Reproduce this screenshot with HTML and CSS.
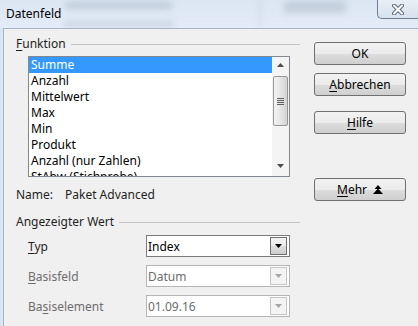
FILE: index.html
```html
<!doctype html>
<html lang="de">
<head>
  <meta charset="UTF-8">
  <title>Datenfeld</title>
  <link rel="stylesheet" href="styles.css">
</head>
<body>
<div class="window">
  <div class="titlebar">
    <span class="title">Datenfeld</span>
    <div class="ghost ghost-a"></div>
    <div class="ghost ghost-b"></div>
    <div class="ghost ghost-c"></div>
    <div class="ghost ghost-line"></div>
    <div class="close">
      <svg width="12" height="11" viewBox="0 0 12 11">
        <path d="M2 1.5 L10 9.5 M10 1.5 L2 9.5" stroke="#5d6b7d" stroke-width="4" stroke-linecap="round"/>
        <path d="M2 1.5 L10 9.5 M10 1.5 L2 9.5" stroke="#fff" stroke-width="2" stroke-linecap="round"/>
      </svg>
    </div>
  </div>
  <div class="frame">
    <div class="left">
      <div class="group-head"><span><u>F</u>unktion</span></div>
      <div class="listbox">
        <ul class="items">
          <li class="selected">Summe</li>
          <li>Anzahl</li>
          <li>Mittelwert</li>
          <li>Max</li>
          <li>Min</li>
          <li>Produkt</li>
          <li>Anzahl (nur Zahlen)</li>
          <li>StAbw (Stichprobe)</li>
        </ul>
        <div class="scrollbar">
          <svg class="arrow" width="7" height="4" viewBox="0 0 7 4"><path d="M3.5 0 L7 4 L0 4 Z" fill="#4d4d4d"/></svg>
          <div class="thumb">
            <span class="grip"></span><span class="grip"></span><span class="grip"></span><span class="grip"></span>
          </div>
          <svg class="arrow down" width="7" height="4" viewBox="0 0 7 4"><path d="M0 0 L7 0 L3.5 4 Z" fill="#4d4d4d"/></svg>
        </div>
      </div>
      <div class="name-row">
        <span class="name-label">Name:</span>
        <span>Paket Advanced</span>
      </div>
      <div class="group-head second"><span>Angezeigter Wert</span></div>
      <div class="fields">
        <span class="label"><u>T</u>yp</span>
        <div class="combo">
          <span>Index</span>
          <span class="drop"><svg width="7" height="4" viewBox="0 0 7 4"><path d="M0 0 L7 0 L3.5 4 Z" fill="#000"/></svg></span>
        </div>
        <span class="label disabled"><u>B</u>asisfeld</span>
        <div class="combo disabled">
          <span>Datum</span>
          <span class="drop"><svg width="7" height="4" viewBox="0 0 7 4"><path d="M0 0 L7 0 L3.5 4 Z" fill="#a6a6a6"/></svg></span>
        </div>
        <span class="label disabled">Ba<u>s</u>iselement</span>
        <div class="combo disabled">
          <span>01.09.16</span>
          <span class="drop"><svg width="7" height="4" viewBox="0 0 7 4"><path d="M0 0 L7 0 L3.5 4 Z" fill="#a6a6a6"/></svg></span>
        </div>
      </div>
    </div>
    <div class="right">
      <button class="btn"><span>OK</span></button>
      <button class="btn"><span><u>A</u>bbrechen</span></button>
      <button class="btn help"><span><u>H</u>ilfe</span></button>
      <button class="btn more"><span><u>M</u>ehr</span>
        <svg width="10" height="10" viewBox="0 0 10 10"><path d="M5 0 L8.5 4 L1.5 4 Z M5 3.5 L10 9 L0 9 Z" fill="#000"/></svg>
      </button>
    </div>
  </div>
</div>
</body>
</html>
```

FILE: styles.css
```css
html, body { margin: 0; padding: 0; }
* { box-sizing: border-box; font-family: "Noto Sans", "Open Sans", sans-serif; }
body { width: 418px; height: 326px; overflow: hidden; background: #d9e5f2; font-size: 12px; color: #1e1e1e; }
u { text-decoration: underline; text-underline-offset: 2px; }

.window { display: flex; flex-direction: column; height: 326px; }
.titlebar { position: relative; height: 28px; background: linear-gradient(#dbe6f3, #e3ecf7); overflow: hidden; }
.title { position: relative; z-index: 1; display: block; padding: 6px 0 0 6px; line-height: 16px; color: #000; }
.ghost { position: absolute; background: #8d99a8; filter: blur(3px); opacity: .35; }
.ghost-a { left: 66px; top: 2px; width: 106px; height: 7px; }
.ghost-b { left: 64px; top: 21px; width: 110px; height: 6px; opacity: .25; }
.ghost-c { left: 284px; top: 1px; width: 62px; height: 12px; background: #a7b3c1; opacity: .45; }
.ghost-line { left: 259px; top: 0; width: 2px; height: 28px; opacity: .25; }
.close { position: absolute; right: 0; top: 0; width: 41px; height: 19px; border: 1px solid #6f7e91; border-top: 0; border-right: 0; border-bottom-left-radius: 5px; background: linear-gradient(#e9eff7, #d6e1ee); display: flex; align-items: center; justify-content: center; }

.frame { flex: 1; display: flex; margin-left: 3px; background: #f0f0f0; border-top: 1px solid #a6b4c5; border-left: 1px solid #a6b4c5; }
.left { width: 296px; padding: 7px 0 0 12px; }
.right { display: flex; flex-direction: column; margin-left: 14px; padding-top: 13px; }

.group-head { display: flex; align-items: center; line-height: 16px; color: #1e1e1e; }
.group-head::after { content: ""; flex: 1; height: 1px; background: #c4c4c4; margin-left: 5px; }
.group-head.second { margin-top: 11px; }

.listbox { display: flex; width: 262px; height: 121px; margin: 4px 0 0 12px; border: 1px solid #828790; background: #fff; overflow: hidden; }
.items { flex: 1; margin: 0; padding: 0; list-style: none; }
.items li { height: 16px; line-height: 16px; padding-left: 2px; color: #000; white-space: nowrap; }
.items li.selected { background: #3399ff; color: #fff; }
.scrollbar { width: 17px; display: flex; flex-direction: column; align-items: center; background: #f4f4f4; }
.scrollbar .arrow { margin: 6px 0 0; }
.scrollbar .arrow.down { margin: auto 0 8px; }
.thumb { width: 15px; height: 50px; margin-top: 9px; border: 1px solid #969696; border-radius: 2px; background: linear-gradient(to right, #f3f3f3, #e2e2e2 60%, #d3d3d3); display: flex; flex-direction: column; align-items: center; justify-content: center; gap: 1px; }
.grip { width: 7px; height: 1px; background: #5f5f5f; }

.name-row { display: flex; margin-top: 10px; line-height: 16px; }
.name-label { width: 49px; }

.fields { display: grid; grid-template-columns: 118px 144px; grid-auto-rows: 22px; row-gap: 8px; margin: 5px 0 0 12px; }
.label { align-self: center; color: #1e1e1e; }
.label.disabled { color: #6d6d6d; }
.combo { display: flex; align-items: center; justify-content: space-between; border: 1px solid #7a7a7a; background: #fff; padding: 0 2px 0 1px; color: #000; }
.combo.disabled { border-color: #b5b5b5; color: #6d6d6d; }
.drop { display: flex; align-items: center; justify-content: center; width: 17px; height: 18px; border: 1px solid #707070; background: linear-gradient(#f2f2f2, #ebebeb 50%, #dddddd 51%, #cfcfcf); }
.combo.disabled .drop { border-color: #c5c5c5; background: #f4f4f4; }

.btn { width: 92px; height: 23px; margin: 0 0 8px; padding: 0; border: 1px solid #707070; border-radius: 3px; background: linear-gradient(#f2f2f2, #ebebeb 50%, #dddddd 51%, #cfcfcf); font-size: 12px; color: #000; display: flex; align-items: center; justify-content: center; gap: 6px; }
.btn.help { margin-top: 7px; }
.btn.more { margin-top: 36px; }
```
